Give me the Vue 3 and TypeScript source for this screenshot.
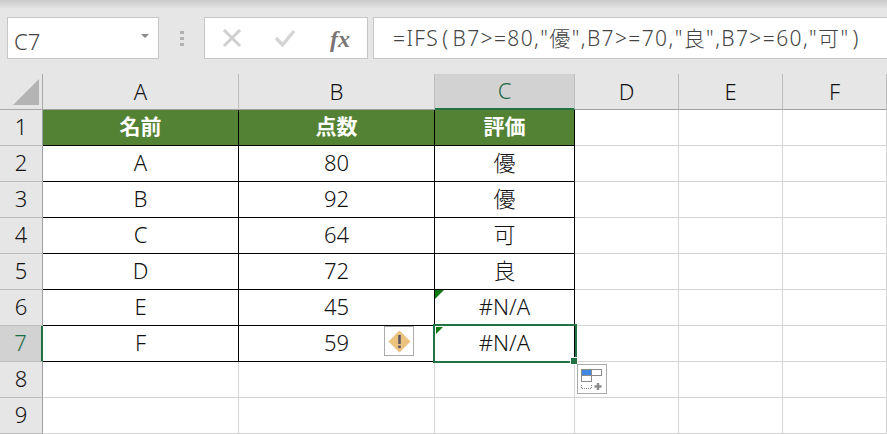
<script setup lang="ts">
const columns = ['A', 'B', 'C', 'D', 'E', 'F']
const rows: string[][] = [
  ['名前', '点数', '評価', '', '', ''],
  ['A', '80', '優', '', '', ''],
  ['B', '92', '優', '', '', ''],
  ['C', '64', '可', '', '', ''],
  ['D', '72', '良', '', '', ''],
  ['E', '45', '#N/A', '', '', ''],
  ['F', '59', '#N/A', '', '', ''],
  ['', '', '', '', '', ''],
  ['', '', '', '', '', ''],
]
function cellClass(r: number, c: number): string[] {
  const out: string[] = []
  if (c < 3 && r < 7) out.push('data')
  if (c < 3 && r === 0) out.push('head')
  return out
}
</script>

<template>
  <div class="app">
    <div class="shade"></div>
    <div class="bar">
      <div class="namebox">
        <span>C7</span>
        <i class="caret"></i>
      </div>
      <div class="grip"><i></i><i></i><i></i></div>
      <div class="buttons">
        <svg width="24" height="24" viewBox="0 0 24 24" class="ic"><path d="M4 4 L20 20 M20 4 L4 20" stroke="#cfcfcf" stroke-width="3" fill="none" /></svg>
        <svg width="24" height="24" viewBox="0 0 24 24" class="ic"><path d="M3 12 L9.5 19 L21 5" stroke="#d4d4d4" stroke-width="3.4" fill="none" /></svg>
        <span class="fx">fx</span>
      </div>
      <div class="formula"><span>=IFS<b>(</b>B7&gt;=80,"優",B7&gt;=70,"良",B7&gt;=60,"可"<b>)</b></span></div>
    </div>

    <div class="sheet">
      <div class="corner"><svg width="28" height="28" viewBox="0 0 28 28"><path d="M27 1 V27 H1 Z" fill="#b4b4b4" /></svg></div>
      <div v-for="(c, i) in columns" :key="c" class="colhead" :class="{ active: i === 2 }">{{ c }}</div>
      <template v-for="(row, r) in rows" :key="r">
        <div class="rowhead" :class="{ active: r === 6 }">{{ r + 1 }}</div>
        <div v-for="(v, c) in row" :key="c" class="cell" :class="cellClass(r, c)">{{ v }}</div>
      </template>

      <i class="tri tri6"></i>
      <div class="selection"><i class="handle"></i></div>
      <i class="tri tri7"></i>
      <div class="errbtn">
        <svg width="25" height="25" viewBox="0 0 25 25">
          <path d="M12.5 1.5 L23.5 12.5 L12.5 23.5 L1.5 12.5 Z" fill="#ecc27f" />
          <rect x="11.2" y="6" width="2.6" height="9" fill="#5f5560" />
          <rect x="11.2" y="16.5" width="2.6" height="2.6" fill="#5f5560" />
        </svg>
      </div>
      <div class="pastebtn">
        <svg width="24" height="24" viewBox="0 0 24 24">
          <rect x="1.5" y="2.5" width="10" height="6" fill="#3f87e0" stroke="#8a8a8a" />
          <rect x="11.5" y="2.5" width="10" height="6" fill="#fff" stroke="#8a8a8a" />
          <rect x="1.5" y="8.5" width="10" height="6" fill="#fff" stroke="#8a8a8a" />
          <path d="M1.5 18 V21.5 H11.5 V18" stroke="#8a8a8a" stroke-dasharray="1 1" fill="none" />
          <path d="M18 16 V23 M14.5 19.5 H21.5" stroke="#8c8c8c" stroke-width="2.4" fill="none" />
        </svg>
      </div>
    </div>
  </div>
</template>

<style scoped>
.app {
  width: 887px;
  height: 434px;
  overflow: hidden;
  background: #e6e6e6;
  font-family: "Noto Sans", "Noto Sans CJK JP", "Liberation Sans", sans-serif;
  font-weight: 300;
  color: #111;
  display: flex;
  flex-direction: column;
  position: relative;
}
.shade {
  height: 9px;
  flex: none;
  background: linear-gradient(#cacaca, #e6e6e6);
}
.bar {
  height: 42px;
  margin-top: 8px;
  flex: none;
  display: flex;
  align-items: stretch;
  padding-left: 7px;
}
.namebox {
  width: 152px;
  box-sizing: border-box;
  background: #fff;
  border: 1px solid #c6c6c6;
  display: flex;
  align-items: center;
  justify-content: space-between;
  padding: 5px 9px 0 6px;
  font-size: 22px;
  color: #444;
}
.caret {
  width: 0;
  height: 0;
  border-left: 4px solid transparent;
  border-right: 4px solid transparent;
  border-top: 4px solid #8a8a8a;
  margin-bottom: 10px;
}
.grip {
  width: 45px;
  display: flex;
  flex-direction: column;
  align-items: center;
  justify-content: center;
  gap: 3px;
}
.grip i {
  width: 4px;
  height: 3px;
  background: #b0b0b0;
}
.buttons {
  width: 164px;
  box-sizing: border-box;
  background: #fff;
  border: 1px solid #c6c6c6;
  display: flex;
  align-items: center;
  padding-left: 15px;
  gap: 30px;
}
.ic {
  flex: none;
}
.buttons .ic + .ic {
  margin-left: -1px;
}
.fx {
  font-family: "Liberation Serif", serif;
  font-style: italic;
  font-weight: bold;
  font-size: 24px;
  color: #7b7474;
  margin-left: 3px;
  line-height: 1;
  margin-top: 1px;
}
.formula {
  flex: 1;
  margin-left: 5px;
  background: #fff;
  border: 1px solid #c6c6c6;
  border-right: none;
  display: flex;
  align-items: center;
  padding: 0 0 3px 19px;
  font-size: 21px;
  letter-spacing: 1.4px;
  color: #444;
  white-space: nowrap;
}
.formula b {
  font-weight: 300;
  margin: 0 3px;
}
.sheet {
  margin-top: 15px;
  flex: none;
  display: grid;
  grid-template-columns: 43px 196px 196px 140px 104px 104px 104px;
  grid-template-rows: 36px repeat(9, 36px);
  position: relative;
}
.corner {
  border-right: 1px solid #a8a8a8;
  border-bottom: 1px solid #a8a8a8;
  box-sizing: border-box;
  display: flex;
  align-items: flex-end;
  justify-content: flex-end;
  padding: 0 2px 3px 0;
}
.colhead {
  box-sizing: border-box;
  border-right: 1px solid #bdbdbd;
  border-bottom: 1px solid #a0a0a0;
  display: flex;
  align-items: center;
  justify-content: center;
  font-size: 22px;
  line-height: 1;
  padding-bottom: 2px;
}
.colhead.active {
  background: #d2d2d2;
  color: #1f6b46;
  border-bottom: 2px solid #217346;
}
.rowhead {
  box-sizing: border-box;
  border-right: 1px solid #a0a0a0;
  border-bottom: 1px solid #bdbdbd;
  display: flex;
  align-items: center;
  justify-content: center;
  font-size: 22px;
  line-height: 1;
  padding-bottom: 3px;
}
.rowhead.active {
  background: #d2d2d2;
  color: #1f6b46;
  border-right: 2px solid #217346;
}
.cell {
  box-sizing: border-box;
  background: #fff;
  border-right: 1px solid #d4d4d4;
  border-bottom: 1px solid #d4d4d4;
  display: flex;
  align-items: center;
  justify-content: center;
  font-size: 22px;
  line-height: 1;
  padding-bottom: 3px;
}
.cell.data {
  border-right-color: #000;
  border-bottom-color: #000;
}
.cell.head {
  background: #548235;
  color: #fff;
  font-weight: 700;
  font-size: 21px;
  padding-bottom: 2px;
}
.tri {
  position: absolute;
  width: 0;
  height: 0;
}
.tri6 {
  left: 435px;
  top: 216px;
  border-top: 9px solid #107c10;
  border-right: 9px solid transparent;
}
.tri7 {
  left: 436px;
  top: 253px;
  border-top: 7px solid #107c10;
  border-right: 7px solid transparent;
}
.selection {
  position: absolute;
  left: 433px;
  top: 250px;
  width: 144px;
  height: 39px;
  box-sizing: border-box;
  border: 2px solid #217346;
}
.handle {
  position: absolute;
  right: -2px;
  bottom: -3px;
  width: 6px;
  height: 6px;
  background: #217346;
  outline: 1px solid #fff;
}
.errbtn {
  position: absolute;
  left: 384px;
  top: 252px;
  width: 30px;
  height: 30px;
  box-sizing: border-box;
  background: #fff;
  border: 1px solid #ababab;
  display: flex;
  align-items: center;
  justify-content: center;
}
.pastebtn {
  position: absolute;
  left: 577px;
  top: 290px;
  width: 30px;
  height: 30px;
  box-sizing: border-box;
  background: #fff;
  border: 1px solid #ababab;
  display: flex;
  align-items: center;
  justify-content: center;
}
</style>
